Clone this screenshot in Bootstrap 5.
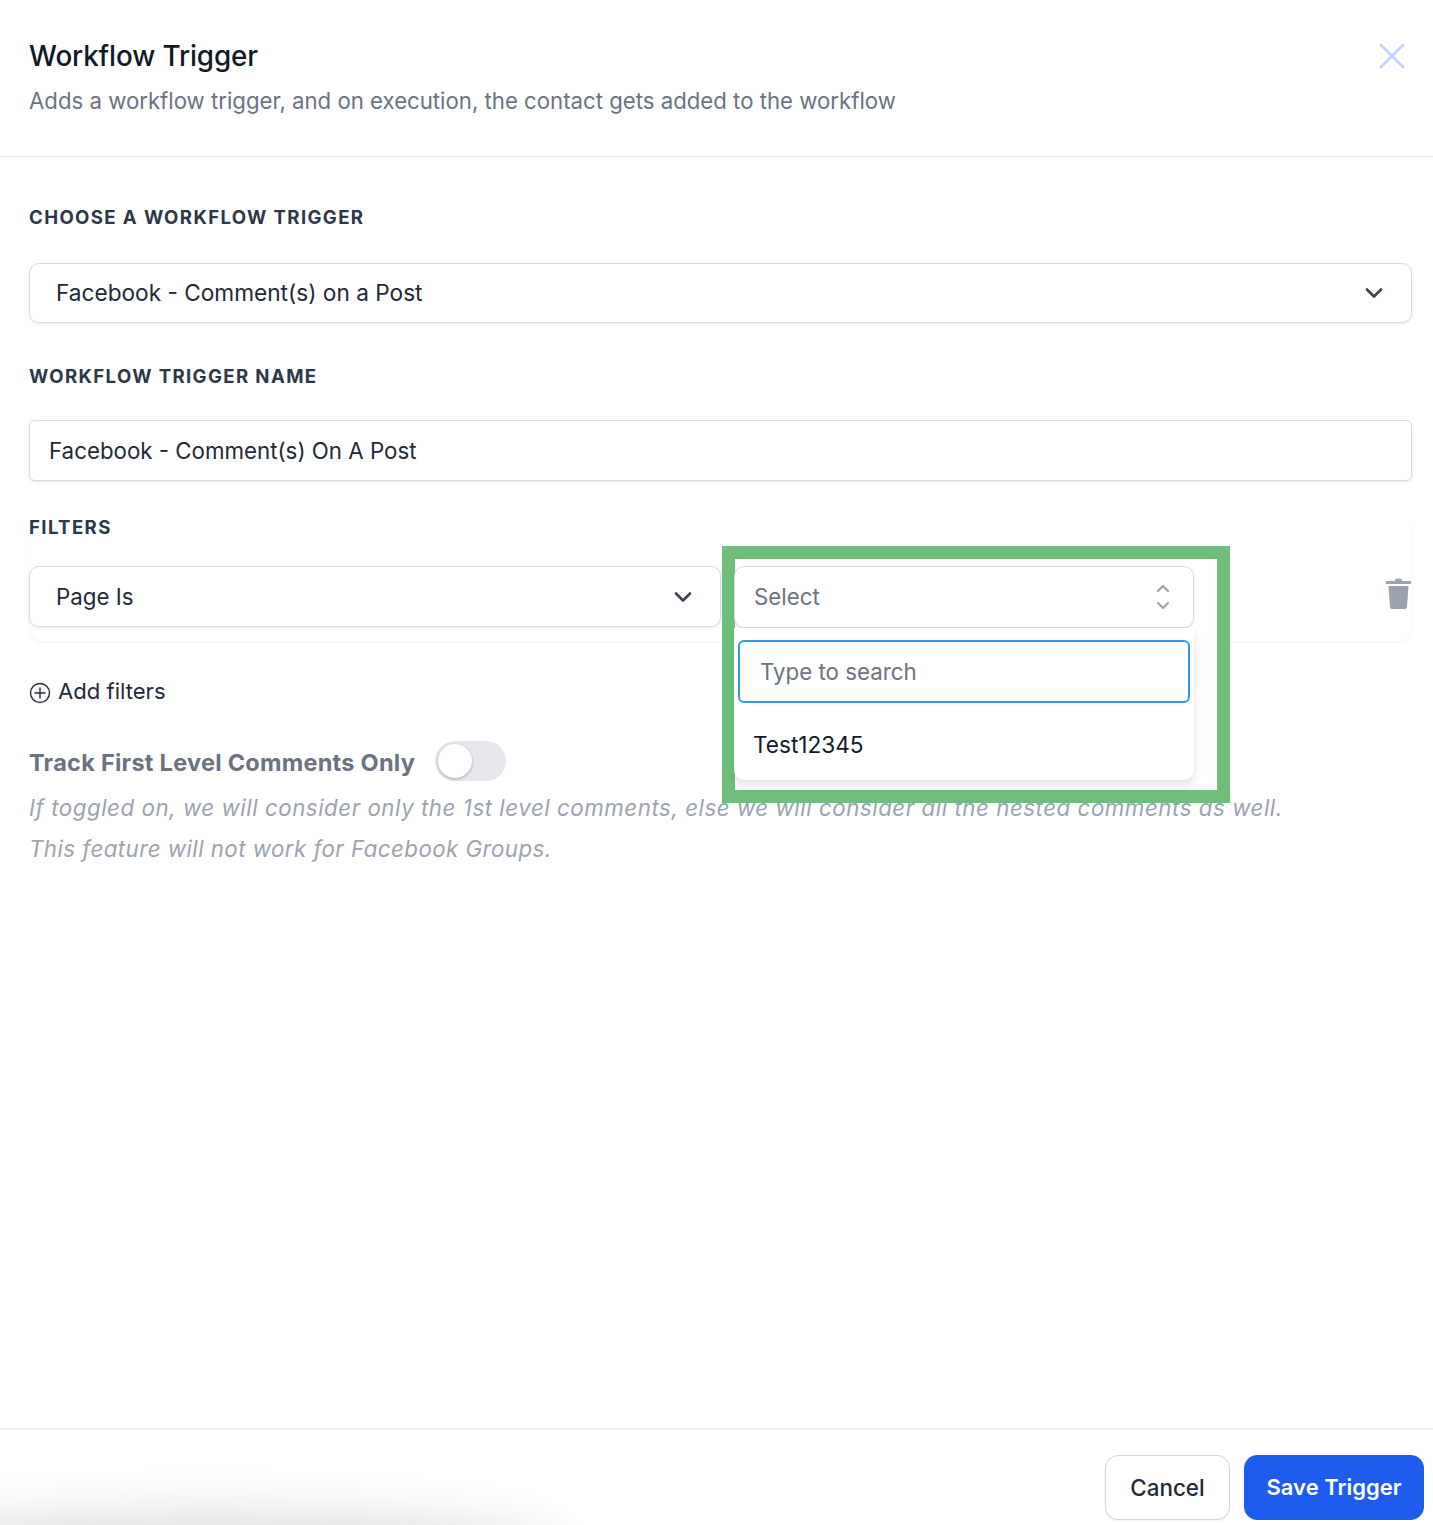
<!DOCTYPE html>
<html lang="en">
<head>
<meta charset="utf-8">
<title>Workflow Trigger</title>
<link href="https://cdn.jsdelivr.net/npm/bootstrap@5.3.0/dist/css/bootstrap.min.css" rel="stylesheet">
<style>
html,body{margin:0;background:#fff;}
body{font-family:Inter,"Liberation Sans",sans-serif;color:#1f2937;}
.wf-page{height:1525px;width:1433px;position:relative;overflow:hidden;background:#fff;}
.wf-head{height:157px;padding:41px 23px 0 29px;border-bottom:1px solid #e9ebf0;}
.wf-title{font-size:27.8px;line-height:30px;font-weight:500;color:#111827;margin:0;letter-spacing:-.1px;}
.wf-sub{font-size:22.2px;line-height:30px;color:#6b7280;margin:15px 0 0;}
.wf-close{width:36px;height:36px;color:#c7d2fe;margin-top:-3px;}
.wf-body{padding:0 21px 0 29px;}
.wf-label{font-size:18.6px;line-height:22px;font-weight:700;letter-spacing:1.38px;color:#2d3748;margin:0;text-transform:uppercase;}
.wf-field{background:#fff;border:1px solid #d8dbe1;border-radius:10px;box-shadow:0 1px 3px rgba(17,24,39,.1);font-size:22.3px;color:#1f2937;}
.wf-sel1{height:60px;padding:0 27px 0 26px;margin-top:35px;font-size:22.65px;}
.wf-inp{height:61px;padding:0 19px;margin-top:33px;border-radius:6px;}
.wf-lab2{margin-top:42px;}
.wf-lab3{margin-top:35px;}
.wf-card{height:122px;margin-top:-19px;padding:47px 0 0;border-radius:14px;box-shadow:0 1px 3px rgba(17,24,39,.06);position:relative;}
.wf-filt1{width:692px;height:61px;padding:0 27px 0 26px;}
.wf-filt2{width:460px;height:62px;margin-left:13px;padding:0 22px 0 19px;color:#6b7280;position:relative;z-index:3;}
.wf-trash{width:25px;height:31px;margin-left:auto;margin-top:12px;margin-right:1px;}
.wf-add{font-size:22.1px;line-height:30px;color:#1f2937;margin-top:35px;}
.wf-add svg{width:22px;height:22px;margin-right:7px;margin-top:3px;}
.wf-track{margin-top:35px;height:40px;}
.wf-tracklbl{font-size:23.5px;font-weight:700;color:#6b7280;line-height:40px;margin-top:2px;letter-spacing:.27px;}
.wf-switch{width:71px;height:40px;border-radius:20px;background:#e5e7eb;margin-left:20px;position:relative;}
.wf-knob{width:34px;height:34px;border-radius:50%;background:#fff;position:absolute;left:3px;top:3px;box-shadow:0 1px 3px rgba(17,24,39,.3);}
.wf-hint{font-size:22.3px;line-height:41px;font-style:italic;color:#9ca3af;margin:6px 0 0;letter-spacing:.54px;}
.wf-hint2{letter-spacing:.45px;}
.wf-foot{position:absolute;left:0;right:0;top:1428px;height:97px;border-top:2px solid #eff0f4;padding:25px 9px 0 0;}
.wf-btn{height:65px;border-radius:13px;font-size:22.4px;font-weight:500;padding:0;}
.wf-cancel{width:125px;background:#fff;border:1px solid #d1d5db;color:#1f2937;box-shadow:0 1px 2px rgba(17,24,39,.06);}
.wf-save{width:180px;background:#1e5cf0;border:1px solid #1e5cf0;color:#fff;font-size:22px;font-weight:600;margin-left:14px;}
.wf-callout{position:absolute;left:722px;top:546px;width:508px;height:257px;border:13px solid #6fbf7b;background:#fff;z-index:2;}
.wf-menu{position:absolute;left:734px;top:628px;width:460px;height:152px;background:#fff;border-radius:0 0 10px 10px;box-shadow:0 6px 10px rgba(17,24,39,.12);z-index:3;padding:12px 5px 0 4px;}
.wf-search{height:63px;border:2px solid #2f9ae6;border-radius:6px;padding:0 20px;font-size:22.3px;color:#6b7280;width:452px;}
.wf-opt{font-size:22.6px;line-height:30px;color:#111827;margin:27px 0 0 15px;}
.wf-haze{position:absolute;left:-120px;top:1535px;width:660px;height:40px;border-radius:50%;box-shadow:0 0 50px 20px rgba(0,0,0,.14);background:rgba(0,0,0,.14);}
</style>
</head>
<body>
<div class="wf-page">
  <div class="wf-head d-flex justify-content-between align-items-start">
    <div>
      <h1 class="wf-title">Workflow Trigger</h1>
      <p class="wf-sub">Adds a workflow trigger, and on execution, the contact gets added to the workflow</p>
    </div>
    <svg class="wf-close" viewBox="0 0 36 36" fill="none" stroke="currentColor" stroke-width="3" stroke-linecap="round"><path d="M7 7 29 29M29 7 7 29"/></svg>
  </div>
  <div class="wf-body">
    <p class="wf-label" style="margin-top:49px">Choose a workflow trigger</p>
    <div class="wf-field wf-sel1 d-flex align-items-center justify-content-between">
      <span>Facebook - Comment(s) on a Post</span>
      <svg width="20" height="12" viewBox="0 0 20 12" fill="none" stroke="#374151" stroke-width="2.6" stroke-linecap="round" stroke-linejoin="round"><path d="M3 2.5 10 9.5 17 2.5"/></svg>
    </div>
    <p class="wf-label wf-lab2">Workflow trigger name</p>
    <div class="wf-field wf-inp d-flex align-items-center">Facebook - Comment(s) On A Post</div>
    <p class="wf-label wf-lab3">Filters</p>
    <div class="wf-card d-flex align-items-start">
      <div class="wf-field wf-filt1 d-flex align-items-center justify-content-between">
        <span>Page Is</span>
        <svg width="20" height="12" viewBox="0 0 20 12" fill="none" stroke="#374151" stroke-width="2.6" stroke-linecap="round" stroke-linejoin="round"><path d="M3 2.5 10 9.5 17 2.5"/></svg>
      </div>
      <div class="wf-field wf-filt2 d-flex align-items-center justify-content-between">
        <span>Select</span>
        <svg width="16" height="28" viewBox="0 0 16 28" fill="none" stroke="#9ca3af" stroke-width="2.2" stroke-linecap="round" stroke-linejoin="round"><path d="M3 8 8 3 13 8M3 20 8 25 13 20"/></svg>
      </div>
      <svg class="wf-trash" viewBox="0 0 25 31"><path fill="#9ca3af" d="M1 3h7.500L10 .5h5L16.500 3H24a1 1 0 0 1 0 3H1a1 1 0 0 1 0-3zM2.500 8h20l-1.500 21a2 2 0 0 1-2 2H6a2 2 0 0 1-2-2z"/></svg>
    </div>
    <div class="wf-add d-flex align-items-center">
      <svg viewBox="0 0 22 22" fill="none" stroke="#1f2937" stroke-width="1.400"><circle cx="11" cy="11" r="9.500"/><path d="M11 5.500v11M5.500 11h11"/></svg>
      <span>Add filters</span>
    </div>
    <div class="wf-track d-flex align-items-start">
      <span class="wf-tracklbl">Track First Level Comments Only</span>
      <div class="wf-switch"><div class="wf-knob"></div></div>
    </div>
    <p class="wf-hint">If toggled on, we will consider only the 1st level comments, else we will consider all the nested comments as well.<br><span class="wf-hint2">This feature will not work for Facebook Groups.</span></p>
  </div>
  <div class="wf-callout"></div>
  <div class="wf-menu">
    <div class="wf-search d-flex align-items-center">Type to search</div>
    <div class="wf-opt">Test12345</div>
  </div>
  <div class="wf-haze"></div>
  <div class="wf-foot d-flex justify-content-end align-items-start">
    <button type="button" class="btn wf-btn wf-cancel">Cancel</button>
    <button type="button" class="btn wf-btn wf-save">Save Trigger</button>
  </div>
</div>
<script src="https://cdn.jsdelivr.net/npm/bootstrap@5.3.0/dist/js/bootstrap.bundle.min.js"></script>
</body>
</html>
